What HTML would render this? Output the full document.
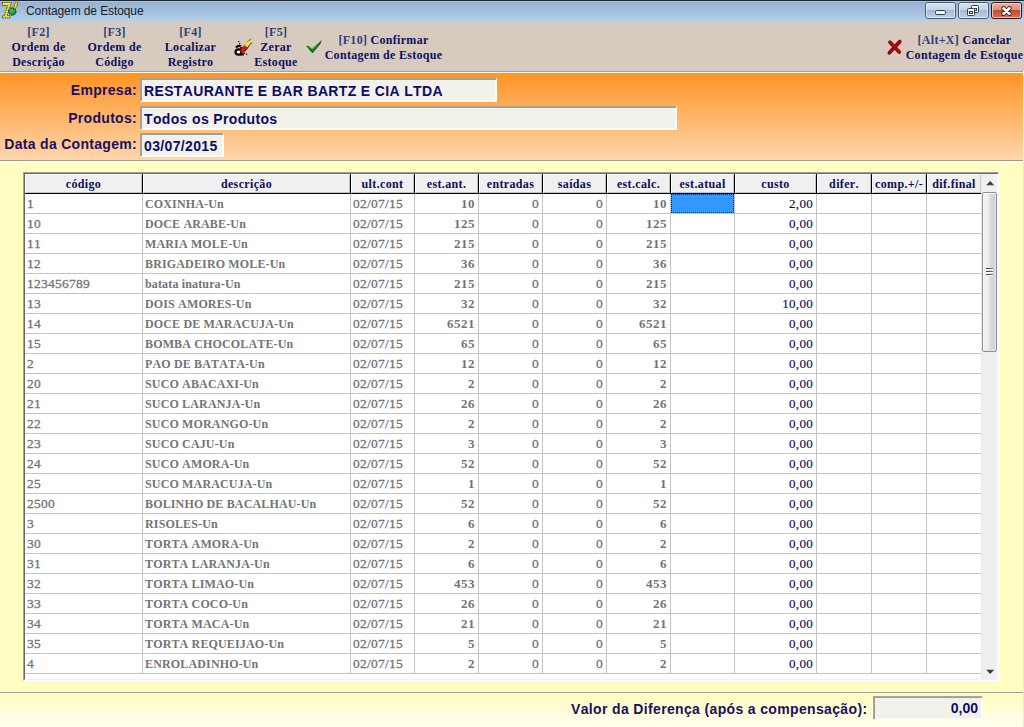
<!DOCTYPE html>
<html><head><meta charset="utf-8">
<style>
*{box-sizing:border-box;margin:0;padding:0;font-kerning:none}
html,body{width:1024px;height:727px;overflow:hidden;background:#fffdc2;position:relative}
.a{position:absolute}
.serif{font-family:"Liberation Serif",serif;font-weight:bold}
.sans{font-family:"Liberation Sans",sans-serif}
#title{left:0;top:0;width:1024px;height:22px;background:linear-gradient(#97b3d2 2px,#b6d1ea 21px);border-top:1px solid #1c2636}
#title .t{left:26px;top:2px;font-size:12px;color:#1a1a2a;line-height:16px;letter-spacing:-0.1px}
#tb{left:0;top:22px;width:1024px;height:49px;background:#d7cbbf}
.hl{left:0;width:1024px;height:1px}
.btn{top:25px;text-align:center;font-size:12px;line-height:15px;color:#10105e;letter-spacing:0.3px}
.btn .k{color:#323c7a}
#orange{left:0;top:73px;width:1023px;height:87px;background:linear-gradient(#ff9424,#ffd6ac)}
.lbl{font-size:14px;font-weight:bold;color:#1b1060;text-align:right;width:200px;letter-spacing:0.3px}
.inp{height:24px;background:#f2f1ea;border:1px solid;border-color:#aca294 #fffff4 #fffff4 #aca294;box-shadow:inset 1px 1px 0 #9c9e9c, inset -1px -1px 0 #fbfbf2;font-size:14px;font-weight:bold;color:#0c0c68;padding-left:3px;padding-top:2px;line-height:20px;letter-spacing:0.35px}
#grid{left:23px;top:172px;width:976px;height:509px;background:#fff;border-top:1px solid #a0a0a0;border-left:1px solid #a0a0a0;border-right:1px solid #fff;border-bottom:1px solid #fff}
#gi{left:0;top:0;width:974px;height:507px;border-top:1px solid #696969;border-left:1px solid #696969;border-bottom:1px solid #f0f0f0;overflow:hidden}
table{border-collapse:separate;border-spacing:0;table-layout:fixed;position:absolute;left:0;top:0}
td,th{font-family:"Liberation Serif",serif;font-weight:bold;font-size:12px;white-space:nowrap;overflow:hidden}
th{height:20px;background:#f0f0f0;color:#0e0e5c;letter-spacing:0.35px;border-right:1px solid #000;border-bottom:1px solid #000;box-shadow:inset 1px 1px 0 #fff, inset -1px -1px 0 #c4c4c4;text-align:center;padding:0;line-height:18px}
td{height:20px;color:#727478;border-right:1px solid #c4c4c4;border-bottom:1px solid #c4c4c4;padding:2px 3px 0 2px;line-height:17px}
td{letter-spacing:0.15px}
td.n{letter-spacing:0.25px;font-size:13.5px;font-weight:normal;-webkit-text-stroke:0.3px #727478;padding-top:0;line-height:19px;padding-left:2px}
td.r.n{padding-right:3px}
td.n.b{font-weight:bold;font-size:13px;letter-spacing:0.5px;-webkit-text-stroke:0}
td.r{text-align:right}
td.c{color:#0a0a5a;letter-spacing:0.3px;padding-right:3px;font-size:13px;font-weight:normal;padding-top:0;line-height:19px;-webkit-text-stroke:0.15px #0a0a5a}
td.sel{padding:0;line-height:0}
td.sel div{width:63px;height:19px;background:#3399ff;border:1px dotted #1a1a1a}
#sb{left:956px;top:0;width:17px;height:505px;background:linear-gradient(90deg,#e6e6e6 0,#efefef 1px,#f0f0f0 15px,#f7f7f7 16px)}
.thumb{left:1px;top:18px;width:15px;height:160px;border:1px solid #8e8f8f;border-radius:2px;background:linear-gradient(90deg,#f4f4f4 0%,#ebebeb 45%,#d9d9df 55%,#d0d0d6 100%);box-shadow:inset 1px 1px 0 #fbfbfb, inset -1px -1px 0 #e4e4e8}
.grip{left:3px;width:7px;height:1px;background:linear-gradient(90deg,#3a3a3a,#7a7a7a);box-shadow:0 1px 0 #fdfdfd}
#bottom{left:0;top:694px;width:1023px;height:33px;background:linear-gradient(#fffbbe,#fffff2)}
</style></head><body>
<div id="title" class="a">
  <div class="a" style="left:0;top:0;width:1024px;height:1px;background:#b3c3d3"></div>
  <svg class="a" style="left:0;top:-1px" width="20" height="20" viewBox="0 0 20 20">
    <defs><radialGradient id="gg" cx="0.4" cy="0.35" r="0.7"><stop offset="0" stop-color="#4cc04a"/><stop offset="0.7" stop-color="#2a9440"/><stop offset="1" stop-color="#1a6a5a"/></radialGradient></defs>
    <path d="M2 2.5 H11.5 L10.5 5.5 L7.2 15.5 H10 V18 H2.2 L2.8 15.5 H4.3 L7.6 5.5 H2.5 Z" fill="#ecdc1c" stroke="#2a2400" stroke-width="0.9" stroke-dasharray="1 0.8"/>
    <path d="M3 3.5 H10" stroke="#fff870" stroke-width="1"/>
    <circle cx="12.3" cy="11.5" r="3.7" fill="url(#gg)" stroke="#0c1830" stroke-width="1" stroke-dasharray="1.2 0.8"/>
    <path d="M13.2 8.8 L14.6 5.4 L14 5.2 L15.6 2 L18.2 2.4 L17 4.6 L17.8 4.8 L15.4 8.6 Z" fill="#f2e428" stroke="#1a1a00" stroke-width="0.8" stroke-dasharray="1 0.8"/>
  </svg>
  <div class="a t sans">Contagem de Estoque</div>
  <svg class="a" style="left:925px;top:1px" width="31" height="17">
    <defs><linearGradient id="gb" x1="0" y1="0" x2="0" y2="1"><stop offset="0" stop-color="#d6e3f1"/><stop offset="0.47" stop-color="#c3d4e8"/><stop offset="0.5" stop-color="#a6bcd6"/><stop offset="1" stop-color="#bdd0e5"/></linearGradient>
    <linearGradient id="gr" x1="0" y1="0" x2="0" y2="1"><stop offset="0" stop-color="#eab0a2"/><stop offset="0.47" stop-color="#dc8e7c"/><stop offset="0.5" stop-color="#c44a2c"/><stop offset="1" stop-color="#d8745c"/></linearGradient></defs>
    <rect x="0.5" y="0.5" width="30" height="16" rx="2.5" fill="url(#gb)" stroke="#4c5a6c"/>
    <rect x="1.5" y="1.5" width="28" height="14" rx="1.5" fill="none" stroke="#e6eef8" stroke-opacity="0.8"/>
    <rect x="10.5" y="8.5" width="10" height="4" rx="1.2" fill="#f4f2ee" stroke="#36404c"/>
  </svg>
  <svg class="a" style="left:958px;top:1px" width="31" height="17">
    <rect x="0.5" y="0.5" width="30" height="16" rx="2.5" fill="url(#gb)" stroke="#4c5a6c"/>
    <rect x="1.5" y="1.5" width="28" height="14" rx="1.5" fill="none" stroke="#e6eef8" stroke-opacity="0.8"/>
    <rect x="13.5" y="3.5" width="7" height="7" rx="1" fill="#fafafa" stroke="#343c48"/>
    <rect x="16" y="6" width="3" height="3" fill="#343c48"/><rect x="17" y="7" width="1" height="1" fill="#fff"/>
    <rect x="9.5" y="6.5" width="7" height="7" rx="1" fill="#fafafa" stroke="#343c48"/>
    <rect x="11" y="9" width="4" height="3" fill="#343c48"/><rect x="12" y="10" width="2" height="1" fill="#fff"/>
  </svg>
  <svg class="a" style="left:991px;top:1px" width="31" height="17">
    <rect x="0.5" y="0.5" width="30" height="16" rx="2.5" fill="url(#gr)" stroke="#3c1414"/>
    <rect x="1.5" y="1.5" width="28" height="14" rx="1.5" fill="none" stroke="#f8d8d0" stroke-opacity="0.8"/>
    <path d="M12.5 6.3 L18.5 11.7 M18.5 6.3 L12.5 11.7" stroke="#3a2424" stroke-width="4.4" stroke-linecap="round"/>
    <path d="M12.5 6.3 L18.5 11.7 M18.5 6.3 L12.5 11.7" stroke="#ffffff" stroke-width="2.6" stroke-linecap="round"/>
  </svg>
</div>
<div id="tb" class="a"></div>
<div class="a hl" style="top:71px;background:#a8a098"></div>
<div class="a hl" style="top:72px;background:#fffbe8"></div>

<div class="a btn serif" style="left:0;width:77px"><span class="k">[F2]</span><br>Ordem de<br>Descrição</div>
<div class="a btn serif" style="left:76px;width:77px"><span class="k">[F3]</span><br>Ordem de<br>Código</div>
<div class="a btn serif" style="left:152px;width:77px"><span class="k">[F4]</span><br>Localizar<br>Registro</div>
<div class="a btn serif" style="left:246px;width:60px"><span class="k">[F5]</span><br>Zerar<br>Estoque</div>
<div class="a btn serif" style="left:323px;width:121px;top:33px"><span class="k">[F10]</span> Confirmar<br>Contagem de Estoque</div>
<div class="a btn serif" style="left:904px;width:121px;top:33px"><span class="k">[Alt+X]</span> Cancelar<br>Contagem de Estoque</div>


<svg class="a" style="left:233px;top:37px" width="20" height="20" viewBox="0 0 20 20">
  <path d="M3 10.6 Q4.6 8.2 7.8 9" stroke="#000" stroke-width="2.2" fill="none"/>
  <ellipse cx="5.6" cy="15" rx="3.1" ry="2.7" fill="#fff" stroke="#000" stroke-width="2.2"/>
  <path d="M8.4 10 V17.4 H10.8" stroke="#000" stroke-width="2.2" fill="none"/>
  <path d="M9.8 13.4 L13.4 9.4" stroke="#e41212" stroke-width="4.8" stroke-linecap="round"/>
  <path d="M13.2 9.6 L17.6 3.2" stroke="#f2ea36" stroke-width="3.6" stroke-linecap="butt"/>
  <path d="M11.6 14.2 L19 5.2" stroke="#000" stroke-width="1.1" stroke-dasharray="1 0.9"/>
  <path d="M14.6 4.6 L18.2 1.8" stroke="#000" stroke-width="1" stroke-dasharray="1 0.9"/>
  <rect x="5" y="4" width="1.2" height="1.2" fill="#000"/><rect x="6" y="6.2" width="1.2" height="1.2" fill="#000"/><rect x="7.2" y="8" width="1.2" height="1.2" fill="#000"/>
  <rect x="11" y="15.6" width="1.2" height="1.2" fill="#000"/><rect x="13" y="16.6" width="1.2" height="1.2" fill="#000"/>
</svg>
<svg class="a" style="left:304px;top:36px" width="20" height="20" viewBox="0 0 20 20">
  <path d="M2 10.2 L4.6 9.4 L8 12.6 L18 3.6 L16.8 6.6 L8.4 16.8 Z" fill="#1a8c1a"/>
  <path d="M8.6 16.6 L17 6.4 M5.6 12.8 L8.4 16.4" stroke="#061a06" stroke-width="1.1" stroke-dasharray="1 0.7"/>
  <path d="M4.6 9.4 L8 12.6 L16 5.2" stroke="#a8e8a0" stroke-width="0.8" fill="none" opacity="0.7"/>
</svg>
<svg class="a" style="left:884px;top:37px" width="20" height="20" viewBox="0 0 20 20">
  <path d="M6 5.2 L15.2 15 M15.8 4.6 L5.4 15.8" stroke="#9a0812" stroke-width="3.8" stroke-linecap="round"/><path d="M6.6 5.6 L14.6 14.2" stroke="#c01020" stroke-width="1.2" stroke-linecap="round" opacity="0.6"/>
</svg>
<div id="orange" class="a"></div>
<div class="a hl" style="top:160px;width:1023px;background:#a09890"></div>
<div class="a hl" style="top:161px;width:1023px;background:#fffff4"></div>
<div class="a lbl sans" style="left:-63px;top:82px">Empresa:</div>
<div class="a lbl sans" style="left:-63px;top:110px">Produtos:</div>
<div class="a lbl sans" style="left:-63px;top:136px">Data da Contagem:</div>
<div class="a inp sans" style="left:140px;top:78px;width:357px">RESTAURANTE E BAR BARTZ E CIA LTDA</div>
<div class="a inp sans" style="left:140px;top:106px;width:537px">Todos os Produtos</div>
<div class="a inp sans" style="left:140px;top:133px;width:84px">03/07/2015</div>

<div id="grid" class="a"><div id="gi" class="a">
<table id="tbl" cellspacing="0"><colgroup><col style="width:118px"><col style="width:208px"><col style="width:64px"><col style="width:64px"><col style="width:64px"><col style="width:64px"><col style="width:64px"><col style="width:64px"><col style="width:82px"><col style="width:55px"><col style="width:55px"><col style="width:55px"></colgroup><tr><th>código</th><th>descrição</th><th>ult.cont</th><th>est.ant.</th><th>entradas</th><th>saídas</th><th>est.calc.</th><th>est.atual</th><th>custo</th><th>difer.</th><th>comp.+/-</th><th>dif.final</th></tr><tr><td class="n">1</td><td>COXINHA-Un</td><td class="n">02/07/15</td><td class="r n b">10</td><td class="r n">0</td><td class="r n">0</td><td class="r n b">10</td><td class="sel"><div></div></td><td class="r c n2">2,00</td><td></td><td></td><td></td></tr><tr><td class="n">10</td><td>DOCE ARABE-Un</td><td class="n">02/07/15</td><td class="r n b">125</td><td class="r n">0</td><td class="r n">0</td><td class="r n b">125</td><td></td><td class="r c n2">0,00</td><td></td><td></td><td></td></tr><tr><td class="n">11</td><td>MARIA MOLE-Un</td><td class="n">02/07/15</td><td class="r n b">215</td><td class="r n">0</td><td class="r n">0</td><td class="r n b">215</td><td></td><td class="r c n2">0,00</td><td></td><td></td><td></td></tr><tr><td class="n">12</td><td>BRIGADEIRO MOLE-Un</td><td class="n">02/07/15</td><td class="r n b">36</td><td class="r n">0</td><td class="r n">0</td><td class="r n b">36</td><td></td><td class="r c n2">0,00</td><td></td><td></td><td></td></tr><tr><td class="n">123456789</td><td>batata inatura-Un</td><td class="n">02/07/15</td><td class="r n b">215</td><td class="r n">0</td><td class="r n">0</td><td class="r n b">215</td><td></td><td class="r c n2">0,00</td><td></td><td></td><td></td></tr><tr><td class="n">13</td><td>DOIS AMORES-Un</td><td class="n">02/07/15</td><td class="r n b">32</td><td class="r n">0</td><td class="r n">0</td><td class="r n b">32</td><td></td><td class="r c n2">10,00</td><td></td><td></td><td></td></tr><tr><td class="n">14</td><td>DOCE DE MARACUJA-Un</td><td class="n">02/07/15</td><td class="r n b">6521</td><td class="r n">0</td><td class="r n">0</td><td class="r n b">6521</td><td></td><td class="r c n2">0,00</td><td></td><td></td><td></td></tr><tr><td class="n">15</td><td>BOMBA CHOCOLATE-Un</td><td class="n">02/07/15</td><td class="r n b">65</td><td class="r n">0</td><td class="r n">0</td><td class="r n b">65</td><td></td><td class="r c n2">0,00</td><td></td><td></td><td></td></tr><tr><td class="n">2</td><td>PAO DE BATATA-Un</td><td class="n">02/07/15</td><td class="r n b">12</td><td class="r n">0</td><td class="r n">0</td><td class="r n b">12</td><td></td><td class="r c n2">0,00</td><td></td><td></td><td></td></tr><tr><td class="n">20</td><td>SUCO ABACAXI-Un</td><td class="n">02/07/15</td><td class="r n b">2</td><td class="r n">0</td><td class="r n">0</td><td class="r n b">2</td><td></td><td class="r c n2">0,00</td><td></td><td></td><td></td></tr><tr><td class="n">21</td><td>SUCO LARANJA-Un</td><td class="n">02/07/15</td><td class="r n b">26</td><td class="r n">0</td><td class="r n">0</td><td class="r n b">26</td><td></td><td class="r c n2">0,00</td><td></td><td></td><td></td></tr><tr><td class="n">22</td><td>SUCO MORANGO-Un</td><td class="n">02/07/15</td><td class="r n b">2</td><td class="r n">0</td><td class="r n">0</td><td class="r n b">2</td><td></td><td class="r c n2">0,00</td><td></td><td></td><td></td></tr><tr><td class="n">23</td><td>SUCO CAJU-Un</td><td class="n">02/07/15</td><td class="r n b">3</td><td class="r n">0</td><td class="r n">0</td><td class="r n b">3</td><td></td><td class="r c n2">0,00</td><td></td><td></td><td></td></tr><tr><td class="n">24</td><td>SUCO AMORA-Un</td><td class="n">02/07/15</td><td class="r n b">52</td><td class="r n">0</td><td class="r n">0</td><td class="r n b">52</td><td></td><td class="r c n2">0,00</td><td></td><td></td><td></td></tr><tr><td class="n">25</td><td>SUCO MARACUJA-Un</td><td class="n">02/07/15</td><td class="r n b">1</td><td class="r n">0</td><td class="r n">0</td><td class="r n b">1</td><td></td><td class="r c n2">0,00</td><td></td><td></td><td></td></tr><tr><td class="n">2500</td><td>BOLINHO DE BACALHAU-Un</td><td class="n">02/07/15</td><td class="r n b">52</td><td class="r n">0</td><td class="r n">0</td><td class="r n b">52</td><td></td><td class="r c n2">0,00</td><td></td><td></td><td></td></tr><tr><td class="n">3</td><td>RISOLES-Un</td><td class="n">02/07/15</td><td class="r n b">6</td><td class="r n">0</td><td class="r n">0</td><td class="r n b">6</td><td></td><td class="r c n2">0,00</td><td></td><td></td><td></td></tr><tr><td class="n">30</td><td>TORTA AMORA-Un</td><td class="n">02/07/15</td><td class="r n b">2</td><td class="r n">0</td><td class="r n">0</td><td class="r n b">2</td><td></td><td class="r c n2">0,00</td><td></td><td></td><td></td></tr><tr><td class="n">31</td><td>TORTA LARANJA-Un</td><td class="n">02/07/15</td><td class="r n b">6</td><td class="r n">0</td><td class="r n">0</td><td class="r n b">6</td><td></td><td class="r c n2">0,00</td><td></td><td></td><td></td></tr><tr><td class="n">32</td><td>TORTA LIMAO-Un</td><td class="n">02/07/15</td><td class="r n b">453</td><td class="r n">0</td><td class="r n">0</td><td class="r n b">453</td><td></td><td class="r c n2">0,00</td><td></td><td></td><td></td></tr><tr><td class="n">33</td><td>TORTA COCO-Un</td><td class="n">02/07/15</td><td class="r n b">26</td><td class="r n">0</td><td class="r n">0</td><td class="r n b">26</td><td></td><td class="r c n2">0,00</td><td></td><td></td><td></td></tr><tr><td class="n">34</td><td>TORTA MACA-Un</td><td class="n">02/07/15</td><td class="r n b">21</td><td class="r n">0</td><td class="r n">0</td><td class="r n b">21</td><td></td><td class="r c n2">0,00</td><td></td><td></td><td></td></tr><tr><td class="n">35</td><td>TORTA REQUEIJAO-Un</td><td class="n">02/07/15</td><td class="r n b">5</td><td class="r n">0</td><td class="r n">0</td><td class="r n b">5</td><td></td><td class="r c n2">0,00</td><td></td><td></td><td></td></tr><tr><td class="n">4</td><td>ENROLADINHO-Un</td><td class="n">02/07/15</td><td class="r n b">2</td><td class="r n">0</td><td class="r n">0</td><td class="r n b">2</td><td></td><td class="r c n2">0,00</td><td></td><td></td><td></td></tr></table>
<div id="sb" class="a">
<svg class="a" style="left:0;top:0" width="17" height="17"><path d="M5.2 11.2 H13.2 L9.2 7 Z" fill="#3c3c3c"/></svg>
<div class="a thumb"><div class="a grip" style="top:75px"></div><div class="a grip" style="top:78px"></div><div class="a grip" style="top:81px"></div></div>
<svg class="a" style="left:0;top:488px" width="17" height="17"><path d="M5.2 7.8 H13.2 L9.2 12 Z" fill="#3c3c3c"/></svg>
</div>
</div></div>

<div class="a hl" style="top:692px;width:1023px;background:#a0a098"></div>
<div class="a hl" style="top:693px;width:1023px;background:#fffff8"></div>
<div id="bottom" class="a"></div>
<div class="a sans" style="left:571px;top:701px;font-size:14px;font-weight:bold;color:#1b1060;letter-spacing:0.35px;line-height:17px">Valor da Diferença (após a compensação):</div>
<div class="a sans" style="left:873px;top:696px;width:110px;height:24px;background:#f1f0e9;border:1px solid;border-color:#aaa69c #fffff8 #fffff8 #aaa69c;box-shadow:inset 1px 1px 0 #9c9c9c, inset -1px -1px 0 #fbfbf4;font-size:14px;font-weight:bold;color:#0c0c68;text-align:right;padding-right:4px;padding-top:2px;line-height:19px">0,00</div>
<div class="a" style="left:1023px;top:71px;width:1px;height:91px;background:#fff4e2"></div><div class="a" style="left:1023px;top:162px;width:1px;height:565px;background:#e8e8e4"></div>
</body></html>
